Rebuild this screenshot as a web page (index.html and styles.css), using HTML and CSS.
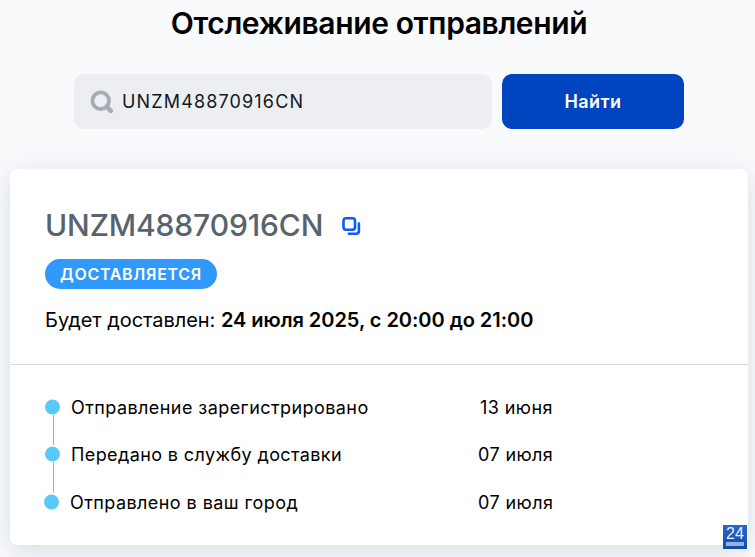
FILE: index.html
```html
<!DOCTYPE html>
<html lang="ru">
<head>
<meta charset="utf-8">
<title>Отслеживание отправлений</title>
<link rel="stylesheet" href="styles.css">
</head>
<body>
<h1 class="title">Отслеживание отправлений</h1>
<form class="search">
  <label class="field">
    <svg class="search-icon" viewBox="0 0 24 24"><circle cx="10.7" cy="10.7" r="8.3"/><path class="handle" d="M16.8 16.8l4 4"/></svg>
    <span class="query">UNZM48870916CN</span>
  </label>
  <button class="submit" type="button">Найти</button>
</form>
<main class="card">
  <section class="summary">
    <div class="code-row">
      <h2 class="code">UNZM48870916CN</h2>
      <svg class="copy" viewBox="0 0 20 20"><rect x="2.5" y="2.2" width="11.5" height="11.5" rx="2.5"/><path d="M17.9 7.5v7.6a2.7 2.7 0 0 1-2.7 2.7H7.8"/></svg>
    </div>
    <span class="status">ДОСТАВЛЯЕТСЯ</span>
    <p class="eta">Будет доставлен: <b>24 июля 2025, с 20:00 до 21:00</b></p>
  </section>
  <ul class="events">
    <li class="event"><i class="dot"></i><span class="name">Отправление зарегистрировано</span><time class="first-date">13 июня</time></li>
    <li class="event middle"><i class="dot"></i><span class="name">Передано в службу доставки</span><time>07 июля</time></li>
    <li class="event last"><i class="dot"></i><span class="name">Отправлено в ваш город</span><time>07 июля</time></li>
  </ul>
</main>
<div class="badge">24<i class="badge-bar"></i></div>
</body>
</html>
```

FILE: styles.css
```css
* { box-sizing: border-box; }
body { margin: 0; height: 557px; overflow: hidden; background: #f9fafc; font-family: Inter, sans-serif; color: #000; }
.title { margin: 0; padding: 3px 0 0 3px; height: 74px; font-size: 30px; line-height: 40px; font-weight: 600; letter-spacing: -.38px; text-align: center; }
.search { display: flex; gap: 10px; margin-left: 74px; height: 55px; }
.field { display: flex; align-items: center; width: 418px; padding-left: 16px; border-radius: 10px; background: #edeef2; }
.search-icon { width: 24px; height: 24px; fill: none; stroke: #a4adb6; stroke-width: 3.8; stroke-linecap: round; }
.handle { stroke-width: 4.6; }
.query { margin-left: 8px; font-size: 18px; letter-spacing: 1.15px; color: #111820; }
.submit { width: 182px; border: 0; border-radius: 10px; background: #0044bf; color: #fff; font: 600 18px Inter, sans-serif; letter-spacing: .4px; }
.card { margin: 40px 7px 0 10px; height: 376px; border-radius: 7px; background: #fff; box-shadow: 0 6px 26px #1c486b28; }
.summary { height: 196px; padding: 36px 35px 0; border-bottom: 1px solid #d2dae5; }
.code-row { display: flex; align-items: center; height: 40px; }
.code { margin: 0; font-size: 30px; font-weight: 500; letter-spacing: -.12px; color: #59636c; }
.copy { width: 20px; height: 20px; margin: 1px 0 0 18px; fill: none; stroke: #0b5cff; stroke-width: 2.6; stroke-linecap: round; }
.status { display: flex; align-items: center; justify-content: center; margin-top: 14px; width: 172px; height: 30px; border-radius: 15px; background: #3099fb; color: #fff; font-size: 16px; font-weight: 600; letter-spacing: .7px; }
.eta { margin: 18px 0 0; font-size: 20px; line-height: 26px; letter-spacing: -.04px; }
.eta b { font-weight: 600; }
.events { list-style: none; margin: 0; padding: 18px 35px 0; }
.event { position: relative; display: flex; align-items: center; height: 48px; font-size: 18px; letter-spacing: .43px; }
.middle { height: 46px; letter-spacing: .39px; }
.last { margin-left: -1px; height: 51px; }
.dot { width: 15px; height: 15px; border-radius: 50%; background: #5ac8fa; transform: translateY(-.5px); }
.event + .event::before { content: ""; position: absolute; left: 8px; top: -16px; width: 1px; height: 30px; background: #72bce6; }
.last.event::before { left: 9px; top: -15px; height: 31px; }
.name { margin-left: 11px; width: 407px; }
.last .name { width: 408px; }
.first-date { margin-left: 2px; }
.badge { position: absolute; left: 723px; top: 525px; width: 24px; height: 24px; background: linear-gradient(#2867cb, #1648a5); color: #e6f0ff; font: 16px/18px "Liberation Sans", sans-serif; text-align: center; }
.badge-bar { position: absolute; left: 3px; top: 17px; width: 18px; height: 4px; background: #8bb4ed; }
```
